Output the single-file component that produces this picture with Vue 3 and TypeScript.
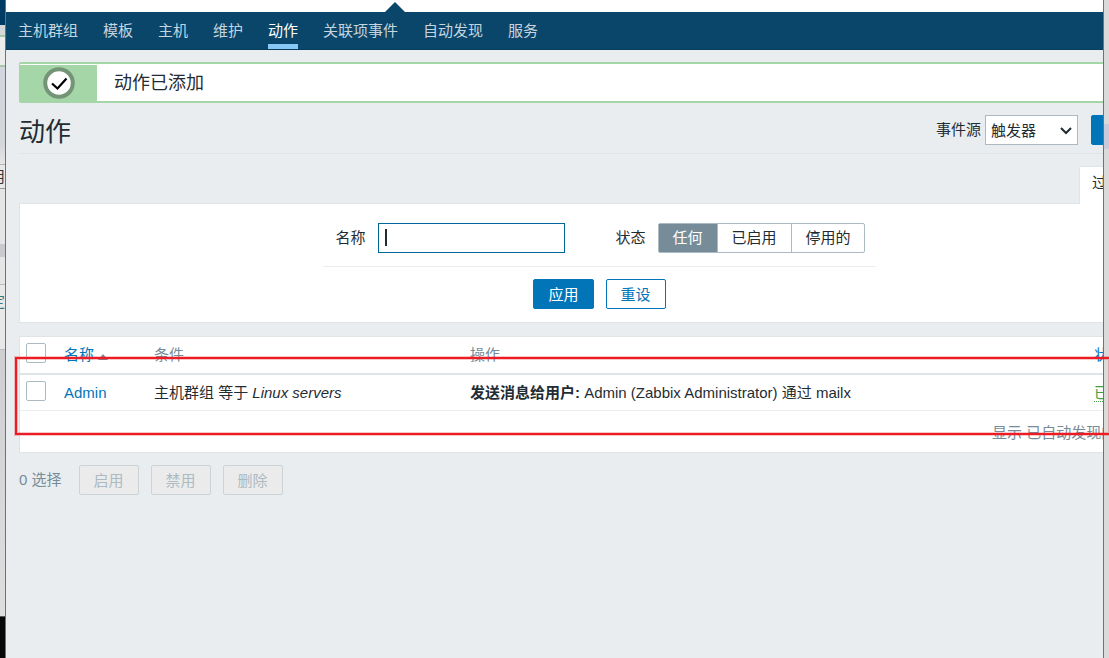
<script setup lang="ts">
import { ref } from 'vue'

interface Action {
  id: number
  name: string
  condition: string
  value: string
  operation: string
  detail: string
  status: string
}

const menu: string[] = ['主机群组', '模板', '主机', '维护', '动作', '关联项事件', '自动发现', '服务']
const current = '动作'
const states: string[] = ['任何', '已启用', '停用的']
const state = ref('任何')
const source = ref('触发器')
const name = ref('')
const bulk: string[] = ['启用', '禁用', '删除']
const actions: Action[] = [
  {
    id: 1,
    name: 'Admin',
    condition: '主机群组 等于',
    value: 'Linux servers',
    operation: '发送消息给用户:',
    detail: 'Admin (Zabbix Administrator) 通过 mailx',
    status: '已启用',
  },
]
</script>

<template>
  <div class="desktop">
    <div class="behind" aria-hidden="true">
      <div class="b-nav"></div>
      <div class="b-gap"></div>
      <div class="b-message"></div>
      <div class="b-title"></div>
      <div class="b-row"><span>启用</span></div>
      <div class="b-space"></div>
      <div class="b-band"></div>
      <div class="b-space b-short"></div>
      <div class="b-row b-link"><span>定</span></div>
      <div class="b-fill"></div>
      <div class="b-dark"></div>
    </div>

    <div class="window">
      <div class="page">
        <div class="top"><span class="pointer"></span></div>
        <nav class="nav">
          <a v-for="item in menu" :key="item" href="#" :class="{ on: item === current }">{{ item }}</a>
        </nav>

        <main class="body">
          <div class="message" role="status">
            <div class="badge">
              <svg width="32" height="32" viewBox="0 0 32 32" aria-hidden="true">
                <circle cx="16" cy="16" r="13.800" fill="#fff" stroke="#749477" stroke-width="4" />
                <path d="M9 16.500l5.500 5L23.500 11.500" fill="none" stroke="#000" stroke-width="2.200" />
              </svg>
            </div>
            <span>动作已添加</span>
          </div>

          <header class="head">
            <h1>动作</h1>
            <label for="source">事件源</label>
            <div class="select">
              <select id="source" v-model="source">
                <option>触发器</option>
              </select>
              <svg width="12" height="8" viewBox="0 0 12 8" aria-hidden="true">
                <path d="M1 1l5 5 5-5" fill="none" stroke="#1f2c33" stroke-width="2" />
              </svg>
            </div>
            <button type="button" class="btn primary create">创建动作</button>
          </header>

          <div class="tabs"><button type="button" class="tab">过滤器</button></div>

          <form class="filter" @submit.prevent>
            <div class="fields">
              <label for="name">名称</label>
              <div class="textbox">
                <input id="name" v-model="name" type="text" />
                <span class="caret"></span>
              </div>
              <span id="state-label" class="state-label">状态</span>
              <div class="segments" role="radiogroup" aria-labelledby="state-label">
                <label v-for="s in states" :key="s" :class="{ on: s === state }">
                  <input v-model="state" type="radio" name="state" :value="s" />{{ s }}
                </label>
              </div>
            </div>
            <div class="submit">
              <button type="submit" class="btn primary">应用</button>
              <button type="reset" class="btn">重设</button>
            </div>
          </form>

          <table class="list">
            <colgroup>
              <col class="c-check" />
              <col class="c-name" />
              <col class="c-cond" />
              <col />
              <col class="c-status" />
            </colgroup>
            <thead>
              <tr>
                <th><input type="checkbox" aria-label="全选" /></th>
                <th><a href="#">名称<span class="sort"></span></a></th>
                <th>条件</th>
                <th>操作</th>
                <th><a href="#">状态</a></th>
              </tr>
            </thead>
            <tbody>
              <tr v-for="a in actions" :key="a.id">
                <td><input type="checkbox" :aria-label="a.name" /></td>
                <td><a href="#">{{ a.name }}</a></td>
                <td>{{ a.condition }} <em>{{ a.value }}</em></td>
                <td><b>{{ a.operation }}</b> {{ a.detail }}</td>
                <td><a href="#" class="enabled">{{ a.status }}</a></td>
              </tr>
            </tbody>
            <tfoot>
              <tr>
                <td colspan="5">显示 已自动发现的 1中的1</td>
              </tr>
            </tfoot>
          </table>

          <div class="bulk">
            <span>0 选择</span>
            <button v-for="b in bulk" :key="b" type="button" class="btn" disabled>{{ b }}</button>
          </div>
        </main>
      </div>
    </div>
    <div class="edge" aria-hidden="true"><div class="edge-mark"></div></div>
    <div class="highlight"></div>
  </div>
</template>

<style>
body {
  margin: 0;
}
</style>

<style scoped>
* {
  box-sizing: border-box;
}
.desktop {
  position: relative;
  display: flex;
  min-height: 100vh;
  overflow: hidden;
  font: 15px/20px 'Liberation Sans', 'Noto Sans CJK SC', sans-serif;
  color: #1f2c33;
}
button,
input,
select {
  font: inherit;
  color: inherit;
  margin: 0;
}
a {
  color: #0275b8;
  text-decoration: none;
}

.behind {
  flex: 0 0 5px;
  display: flex;
  flex-direction: column;
  overflow: hidden;
  background: #dcdddf;
}
.b-nav {
  height: 25px;
  background: #003b63;
}
.b-gap {
  height: 10px;
  background: #d5d8da;
}
.b-message {
  height: 32px;
  background: #ececec;
  border-top: 2px solid #a5c9a7;
  border-bottom: 2px solid #a5c9a7;
}
.b-title {
  height: 98px;
  background: linear-gradient(#d3d5df, #d5d6d8 80%, #e6e6e6);
  border-bottom: 1px solid #b5b5b5;
}
.b-row {
  height: 24px;
  padding-top: 2px;
  display: flex;
  justify-content: flex-end;
  white-space: nowrap;
  background: #e8e8e8;
  border-bottom: 1px solid #999;
  color: #333;
}
.b-space {
  height: 55px;
  background: #e5e5e5;
}
.b-band {
  height: 13px;
  background: #cacace;
}
.b-short {
  height: 28px;
  border-bottom: 1px solid #b9b9b9;
}
.b-link {
  height: 65px;
  padding-top: 7px;
  border-bottom-color: #bbb;
  color: #35777c;
}
.b-fill {
  flex: 1;
  background: linear-gradient(#cfcfd1, #dededf);
}
.b-dark {
  height: 42px;
  background: #070708;
  border-top: 1px solid #555;
}

.window {
  flex: 1;
  min-width: 0;
  overflow: hidden;
  background: #e9edf0;
  border-left: 1px solid #707174;
  border-right: 1px solid #707174;
}
.page {
  width: calc(100% + 90px);
}
.top {
  height: 12px;
  padding-left: 379px;
  display: flex;
  align-items: flex-end;
  background: #fff;
}
.pointer {
  border: 10px solid transparent;
  border-top: 0;
  border-bottom-color: #0a466a;
}
.nav {
  display: flex;
  gap: 25px;
  height: 38px;
  padding: 0 12px;
  background: #0a466a;
  border-bottom: 1px solid #083c5c;
}
.nav a {
  height: 37px;
  padding-top: 9px;
  border-bottom: 5px solid transparent;
  color: #c5d5df;
}
.nav a.on {
  color: #fff;
  border-bottom-color: #87c8f5;
}

.body {
  padding: 12px 13px;
}
.message {
  display: flex;
  align-items: center;
  height: 41px;
  background: #fff;
  border: 2px solid #a5d6a7;
  border-left-width: 1px;
  border-radius: 2px;
  font-size: 18px;
}
.badge {
  align-self: flex-end;
  display: flex;
  align-items: center;
  justify-content: center;
  width: 77px;
  height: 36px;
  margin-right: 17px;
  background: #a5d6a7;
}
.head {
  display: flex;
  align-items: center;
  height: 51px;
  padding-top: 4px;
  margin-bottom: 12px;
  border-bottom: 1px solid #dfe4e7;
}
h1 {
  flex: 1;
  margin: 0;
  padding-top: 4px;
  font-size: 26px;
  line-height: 36px;
  font-weight: 400;
}
.head label {
  margin-right: 4px;
}
.select {
  position: relative;
  width: 93px;
}
.select select {
  display: block;
  appearance: none;
  width: 100%;
  height: 30px;
  padding: 1px 5px 0;
  border: 1px solid #acbbc2;
  border-radius: 0;
  background: #fff;
}
.select svg {
  position: absolute;
  right: 6px;
  top: 12px;
  pointer-events: none;
}
.btn {
  height: 30px;
  padding: 1px 14px 0;
  border: 1px solid #0275b8;
  border-radius: 2px;
  background: #fff;
  color: #0275b8;
  line-height: 27px;
}
.btn.primary {
  background: #0275b8;
  color: #fff;
}
.create {
  width: 89px;
  padding: 1px 0 0;
  margin-left: 13px;
}

.tabs {
  display: flex;
  justify-content: flex-end;
}
.tab {
  width: 101px;
  height: 38px;
  margin-bottom: -1px;
  padding: 0 12px 6px;
  text-align: left;
  background: #fff;
  border: 1px solid #dfe4e7;
  border-bottom: 0;
  border-radius: 2px 2px 0 0;
}
.filter {
  display: flex;
  flex-direction: column;
  align-items: center;
  height: 120px;
  padding-top: 19px;
  margin-bottom: 13px;
  background: #fff;
  border: 1px solid #dfe4e7;
}
.fields {
  display: flex;
  align-items: center;
  padding: 0 11px 13px 12px;
  border-bottom: 1px solid #ebeef0;
}
.textbox {
  position: relative;
  margin: 0 50px 0 13px;
}
.textbox input {
  display: block;
  width: 187px;
  height: 30px;
  padding: 0 6px;
  border: 1px solid #00689e;
  border-radius: 0;
  outline: none;
}
.caret {
  position: absolute;
  left: 7px;
  top: 6px;
  width: 2px;
  height: 17px;
  background: #1f2c33;
}
.state-label {
  margin-right: 13px;
}
.segments {
  display: flex;
  height: 30px;
  border: 1px solid #acbbc2;
  border-radius: 2px;
}
.segments label {
  padding: 0 14px;
  line-height: 28px;
}
.segments label:first-child {
  padding-left: 13px;
}
.segments label:last-child {
  padding-right: 13px;
}
.segments label + label {
  border-left: 1px solid #acbbc2;
}
.segments label.on {
  background: #768d99;
  color: #fff;
}
.segments input {
  position: absolute;
  opacity: 0;
  pointer-events: none;
}
.submit {
  display: flex;
  gap: 12px;
  padding-top: 12px;
}

.list {
  width: 100%;
  table-layout: fixed;
  border-collapse: separate;
  border-spacing: 0;
  background: #fff;
  border: 1px solid #dfe4e7;
}
.c-check {
  width: 39px;
}
.c-name {
  width: 90px;
}
.c-cond {
  width: 316px;
}
.c-status {
  width: 90px;
}
th,
td {
  padding: 0 5px;
  text-align: left;
  white-space: nowrap;
}
th {
  height: 38px;
  border-bottom: 2px solid #dfe4e7;
  font-weight: 400;
  color: #768d99;
}
tbody td {
  height: 36px;
  border-bottom: 1px solid #ebeef0;
}
tfoot td {
  height: 41px;
  padding-top: 2px;
  padding-right: 12px;
  text-align: right;
  color: #768d99;
}
.list input {
  appearance: none;
  display: block;
  width: 20px;
  height: 20px;
  margin: 0 0 4px 1px;
  border: 1px solid #acbbc2;
  border-radius: 2px;
  background: #fff;
}
.sort {
  display: inline-block;
  margin-left: 4px;
  border: 5px solid transparent;
  border-top: 0;
  border-bottom: 6px solid #768d99;
}
.enabled {
  color: #429e47;
  border-bottom: 1px dotted #429e47;
}

.bulk {
  display: flex;
  align-items: center;
  gap: 12px;
  padding-top: 12px;
  color: #768d99;
}
.bulk span {
  margin-right: 5px;
}
.btn:disabled {
  background: #ebebeb;
  border-color: #ccd4d8;
  color: #acbbc2;
}

.edge {
  flex: 0 0 5px;
  padding-top: 124px;
  background: #dadada;
}
.edge-mark {
  height: 25px;
  background: #c9c9dc;
}
.highlight {
  position: absolute;
  left: 15px;
  right: -2px;
  top: 357px;
  height: 78px;
  border: 2px solid #ed1c24;
  box-shadow:
    0 0 0 1px rgba(237, 28, 36, 0.25),
    inset 0 0 0 1px rgba(237, 28, 36, 0.25);
}
</style>
